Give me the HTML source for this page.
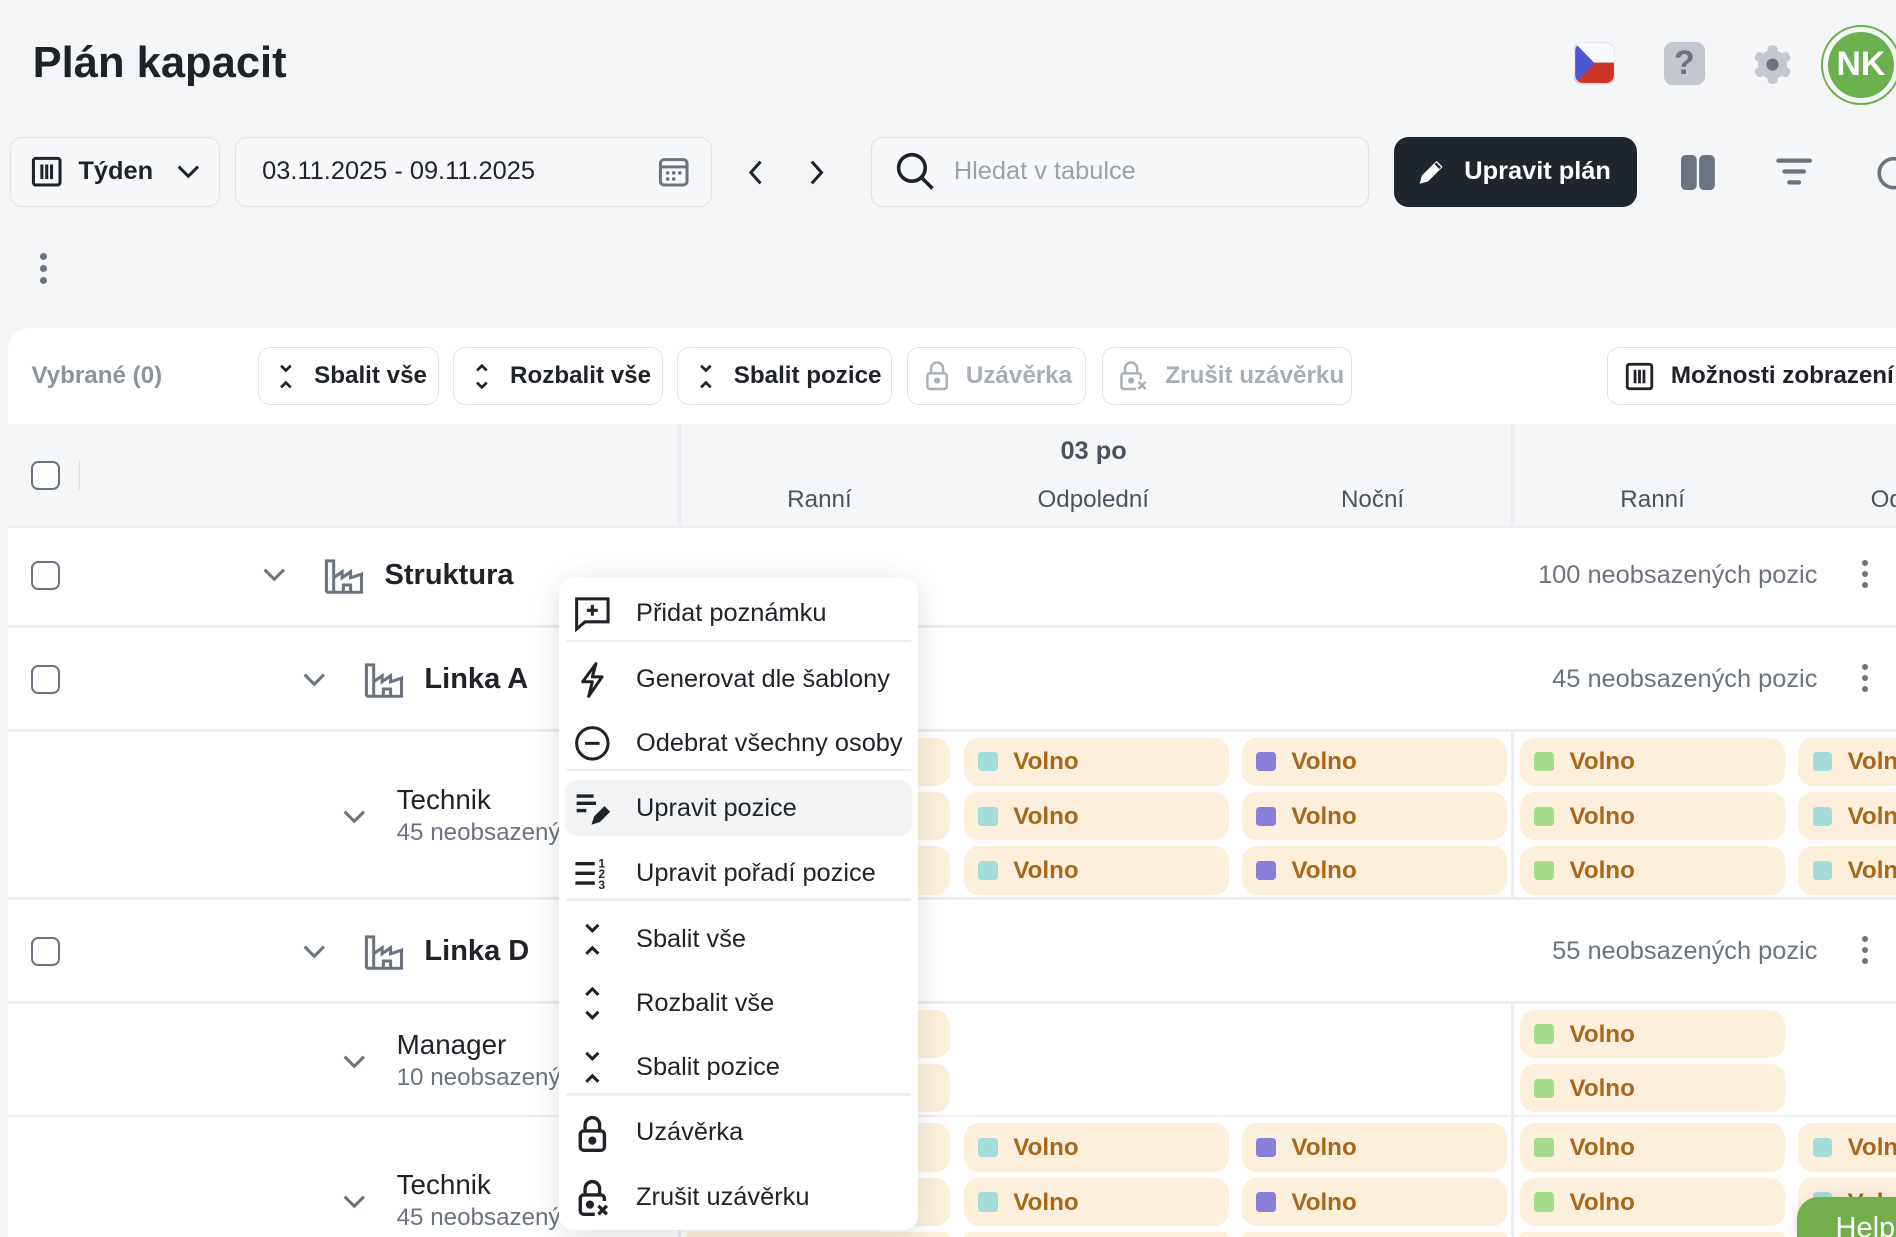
<!DOCTYPE html>
<html><head><meta charset="utf-8">
<style>
html{zoom:1.20918;overflow:hidden;height:1023px;width:1568px}
*{box-sizing:border-box;margin:0;padding:0}
body{width:1568px;height:1023px;overflow:hidden;background:#f5f6f8;font-family:"Liberation Sans",sans-serif;color:#1f2328;position:relative}
.a{position:absolute}
.btn{position:absolute;border:1.5px solid #e1e3e7;border-radius:10px;background:#f7f8fa;display:flex;align-items:center;font-size:21px}
.tb{position:absolute;top:287px;height:48px;border:1.5px solid #e0e2e6;border-radius:10px;background:#fff;display:flex;align-items:center;font-size:20px;font-weight:bold;padding-left:14px;gap:14px}
.dis{color:#a8aeb7}
.line{position:absolute;left:7px;right:0;height:2px;background:#eceef1}
.vl{position:absolute;width:2px;background:#eceef1}
.cb{position:absolute;left:26px;width:24px;height:24px;border:2px solid #6b7380;border-radius:6px;background:#fff}
.chip{position:absolute;width:219px;height:40px;border-radius:12px;background:#fcf0dd;font-size:20px;color:#a8671a;font-weight:bold}
.chip i{position:absolute;left:12px;top:12px;width:16px;height:16px;border-radius:3px}
.chip span{position:absolute;left:41px;top:9px}
.t{background:#a3dcd9}.p{background:#8880d8}.g{background:#a4dc8a}
.lbl{position:absolute;font-size:24px;font-weight:bold;color:#1f2328}
.cnt{position:absolute;right:65px;font-size:21px;color:#6b7380}
.dots{position:absolute;left:1540px;width:6px}
.dots b{display:block;width:5px;height:5px;border-radius:50%;background:#6b7380;margin-bottom:4px}
.menu{position:absolute;left:462px;top:478px;width:297px;height:539px;background:#fff;border-radius:12px;box-shadow:0 4px 24px rgba(0,0,0,.12)}
.mi{position:absolute;left:0;width:297px;height:50px;font-size:21px;color:#1f2328}
.mi span{position:absolute;left:64px;top:14px}
.mi svg{position:absolute;left:12px;top:10px}
.sep{position:absolute;left:6px;width:285px;height:2px;background:#eceef1}
</style></head><body>

<div class="a" style="left:27px;top:32px;font-size:36px;font-weight:bold">Plán kapacit</div>

<svg class="a" style="left:1302px;top:35px" width="34" height="35" viewBox="0 0 34 35"><defs><clipPath id="c"><rect width="34" height="35" rx="7"/></clipPath></defs><g clip-path="url(#c)"><rect width="34" height="35" fill="#f9fafd"/><rect y="17" width="34" height="18" fill="#cc3524"/><path d="M0 0L17 17.5L0 35Z" fill="#4a56d6"/></g><rect x=".5" y=".5" width="33" height="34" rx="7" fill="none" stroke="#e6e8ee"/></svg>
<div class="a" style="left:1376px;top:35px;width:34px;height:35px;border-radius:7px;background:#c4c8ce;color:#6b7380;font-size:28px;font-weight:bold;text-align:center;line-height:35px">?</div>
<svg class="a" style="left:1449px;top:36px" width="34" height="34" viewBox="0 0 34 34"><g fill="#c4c8ce"><circle cx="17" cy="17" r="12"/><rect x="13" y="1" width="8" height="32" rx="3"/><rect x="13" y="1" width="8" height="32" rx="3" transform="rotate(60 17 17)"/><rect x="13" y="1" width="8" height="32" rx="3" transform="rotate(120 17 17)"/></g><circle cx="17" cy="17" r="5" fill="#6b7380"/></svg>
<div class="a" style="left:1506px;top:21px;width:66px;height:66px;border-radius:50%;border:2px solid #6ab04c;padding:4px"><div style="width:100%;height:100%;border-radius:50%;background:#6ab04c;color:#fff;font-size:28px;font-weight:bold;text-align:center;line-height:54px">NK</div></div>

<div class="btn" style="left:8px;top:113px;width:174px;height:58px;font-weight:bold">
 <svg style="margin-left:17px" width="26" height="26" viewBox="0 0 26 26" fill="none" stroke="#1f2328" stroke-width="2.5"><rect x="2" y="2" width="22" height="22" rx="2"/><path d="M9 7v12M13 7v12M17 7v12"/></svg>
 <span style="margin-left:13px">Týden</span>
 <svg style="margin-left:18px" width="22" height="14" viewBox="0 0 22 14" fill="none" stroke="#1f2328" stroke-width="2.5"><path d="M3 3l8 8 8-8"/></svg>
</div>
<div class="btn" style="left:194px;top:113px;width:395px;height:58px">
 <span style="margin-left:22px">03.11.2025 - 09.11.2025</span>
 <svg class="a" style="left:349px;top:15px" width="26" height="26" viewBox="0 0 26 26" fill="none" stroke="#6b7380" stroke-width="2.5"><rect x="2" y="3" width="22" height="21" rx="3"/><path d="M2 9h22"/><g fill="#6b7380" stroke="none"><circle cx="8" cy="14" r="1.5"/><circle cx="13" cy="14" r="1.5"/><circle cx="18" cy="14" r="1.5"/><circle cx="8" cy="19" r="1.5"/><circle cx="13" cy="19" r="1.5"/></g></svg>
</div>
<svg class="a" style="left:617px;top:131px" width="16" height="24" viewBox="0 0 16 24" fill="none" stroke="#1f2328" stroke-width="2.5"><path d="M12 3L4 12l8 9"/></svg>
<svg class="a" style="left:667px;top:131px" width="16" height="24" viewBox="0 0 16 24" fill="none" stroke="#1f2328" stroke-width="2.5"><path d="M4 3l8 9-8 9"/></svg>
<div class="btn" style="left:720px;top:113px;width:412px;height:58px;color:#9aa1ab">
 <svg style="margin-left:19px" width="34" height="34" viewBox="0 0 34 34" fill="none" stroke="#1f2328" stroke-width="3"><circle cx="14" cy="14" r="11"/><path d="M22 22l9 9"/></svg>
 <span style="margin-left:15px">Hledat v tabulce</span>
</div>
<div class="a" style="left:1153px;top:113px;width:201px;height:58px;border-radius:12px;background:#1f262e;color:#fff;font-size:21px;font-weight:bold;display:flex;align-items:center">
 <svg style="margin-left:18px" width="26" height="26" viewBox="0 0 26 26"><path d="M3 23l2-7L17 4l5 5L10 21z" fill="#fff"/><path d="M16 6l4 4" stroke="#1f262e" stroke-width="2"/></svg>
 <span style="margin-left:14px">Upravit plán</span>
</div>
<svg class="a" style="left:1390px;top:128px" width="28" height="29" viewBox="0 0 28 29"><rect x="0" y="0" width="13" height="29" rx="4" fill="#6b7380"/><rect x="15" y="0" width="13" height="29" rx="4" fill="#6b7380"/></svg>
<svg class="a" style="left:1469px;top:130px" width="30" height="24" viewBox="0 0 30 24" stroke="#6b7380" stroke-width="3.5" stroke-linecap="round"><path d="M2 3h26M7 12h16M11 21h8"/></svg>
<svg class="a" style="left:1548px;top:128px" width="20" height="30" viewBox="0 0 20 30" fill="none" stroke="#6b7380" stroke-width="3"><circle cx="18" cy="15" r="12"/></svg>

<div class="a" style="left:33px;top:209px"><div style="width:6px;height:6px;border-radius:50%;background:#6b7380;margin-bottom:4px"></div><div style="width:6px;height:6px;border-radius:50%;background:#6b7380;margin-bottom:4px"></div><div style="width:6px;height:6px;border-radius:50%;background:#6b7380"></div></div>

<div class="a" style="left:7px;top:271px;width:1561px;height:752px;background:#fff;border-top-left-radius:18px"></div>
<div class="a" style="left:26px;top:299px;font-size:20px;font-weight:bold;color:#8c939d">Vybrané (0)</div>

<div class="tb" style="left:213px;width:150px"><svg width="18" height="24" viewBox="0 0 18 24" fill="none" stroke="#1f2328" stroke-width="2.2"><path d="M5 3l4 4 4-4M5 21l4-4 4 4"/></svg>Sbalit vše</div>
<div class="tb" style="left:375px;width:173px"><svg width="18" height="24" viewBox="0 0 18 24" fill="none" stroke="#1f2328" stroke-width="2.2"><path d="M5 7l4-4 4 4M5 17l4 4 4-4"/></svg>Rozbalit vše</div>
<div class="tb" style="left:560px;width:178px"><svg width="18" height="24" viewBox="0 0 18 24" fill="none" stroke="#1f2328" stroke-width="2.2"><path d="M5 3l4 4 4-4M5 21l4-4 4 4"/></svg>Sbalit pozice</div>
<div class="tb dis" style="left:750px;width:148px"><svg width="20" height="26" viewBox="0 0 20 26" fill="none" stroke="#a8aeb7" stroke-width="2"><rect x="2" y="11" width="16" height="13" rx="2"/><path d="M5 11V7a5 5 0 0110 0v4"/><circle cx="10" cy="17" r="1.5" fill="#a8aeb7"/></svg>Uzávěrka</div>
<div class="tb dis" style="left:911px;width:207px"><svg width="24" height="26" viewBox="0 0 24 26" fill="none" stroke="#a8aeb7" stroke-width="2"><path d="M14 24H4a2 2 0 01-2-2V13a2 2 0 012-2h12a2 2 0 012 2v3"/><path d="M5 11V7a5 5 0 0110 0v4"/><circle cx="10" cy="17" r="1.5" fill="#a8aeb7"/><path d="M16 18l6 6M22 18l-6 6"/></svg>Zrušit uzávěrku</div>
<div class="tb" style="left:1329px;width:239px;border-right:none;border-radius:10px 0 0 10px;white-space:nowrap;overflow:hidden"><svg width="24" height="24" viewBox="0 0 26 26" fill="none" stroke="#1f2328" stroke-width="2.5" style="flex:none"><rect x="2" y="2" width="22" height="22" rx="2"/><path d="M9 7v12M13 7v12M17 7v12"/></svg>Možnosti zobrazení</div>

<div class="a" style="left:7px;top:351px;width:1561px;height:85px;background:#f5f6f8"></div>
<div class="vl" style="left:561px;top:351px;height:85px"></div>
<div class="vl" style="left:1250px;top:351px;height:85px"></div>
<div class="vl" style="left:561px;top:604px;height:139px"></div>
<div class="vl" style="left:1250px;top:604px;height:139px"></div>
<div class="vl" style="left:561px;top:829px;height:194px"></div>
<div class="vl" style="left:1250px;top:829px;height:194px"></div>
<div class="a" style="left:65px;top:381px;width:1px;height:24px;background:#dde0e4"></div>
<div class="a" style="left:877px;top:361px;font-size:21px;font-weight:bold;color:#4b5360">03 po</div>
<div class="a" style="left:651px;top:402px;font-size:20px;color:#4b5360">Ranní</div>
<div class="a" style="left:858px;top:402px;font-size:20px;color:#4b5360">Odpolední</div>
<div class="a" style="left:1109px;top:402px;font-size:20px;color:#4b5360">Noční</div>
<div class="a" style="left:1340px;top:402px;font-size:20px;color:#4b5360">Ranní</div>
<div class="a" style="left:1547px;top:402px;font-size:20px;color:#4b5360">Od</div>
<div class="cb" style="top:381px"></div>

<div class="line" style="top:435px"></div>
<div class="line" style="top:517px"></div>
<div class="line" style="top:603px"></div>
<div class="line" style="top:742px"></div>
<div class="line" style="top:828px"></div>
<div class="line" style="top:922px"></div>

<div class="cb" style="top:464px"></div>
<div class="cb" style="top:550px"></div>
<div class="cb" style="top:775px"></div>

<svg class="a" style="left:216px;top:468px" width="22" height="14" viewBox="0 0 22 14" fill="none" stroke="#6b7380" stroke-width="2.5"><path d="M3 3l8 8 8-8"/></svg>
<svg class="a" style="left:268px;top:460px" width="34" height="32" viewBox="0 0 34 32" fill="none" stroke="#6b7380" stroke-width="2.5"><path d="M2 30V4h6v26M8 18l7-5v5l7-5v5l9-3v15H2M16 30v-6h6v6"/></svg>
<div class="lbl" style="left:318px;top:462px">Struktura</div>
<div class="cnt" style="top:464px">100 neobsazených pozic</div>
<div class="dots" style="top:463px"><b></b><b></b><b></b></div>

<svg class="a" style="left:249px;top:555px" width="22" height="14" viewBox="0 0 22 14" fill="none" stroke="#6b7380" stroke-width="2.5"><path d="M3 3l8 8 8-8"/></svg>
<svg class="a" style="left:301px;top:546px" width="34" height="32" viewBox="0 0 34 32" fill="none" stroke="#6b7380" stroke-width="2.5"><path d="M2 30V4h6v26M8 18l7-5v5l7-5v5l9-3v15H2M16 30v-6h6v6"/></svg>
<div class="lbl" style="left:351px;top:548px">Linka A</div>
<div class="cnt" style="top:550px">45 neobsazených pozic</div>
<div class="dots" style="top:549px"><b></b><b></b><b></b></div>

<svg class="a" style="left:282px;top:668px" width="22" height="14" viewBox="0 0 22 14" fill="none" stroke="#6b7380" stroke-width="2.5"><path d="M3 3l8 8 8-8"/></svg>
<div class="a" style="left:328px;top:648px;font-size:23px">Technik</div>
<div class="a" style="left:328px;top:677px;font-size:20px;color:#6b7380">45 neobsazených</div>

<svg class="a" style="left:249px;top:780px" width="22" height="14" viewBox="0 0 22 14" fill="none" stroke="#6b7380" stroke-width="2.5"><path d="M3 3l8 8 8-8"/></svg>
<svg class="a" style="left:301px;top:771px" width="34" height="32" viewBox="0 0 34 32" fill="none" stroke="#6b7380" stroke-width="2.5"><path d="M2 30V4h6v26M8 18l7-5v5l7-5v5l9-3v15H2M16 30v-6h6v6"/></svg>
<div class="lbl" style="left:351px;top:773px">Linka D</div>
<div class="cnt" style="top:775px">55 neobsazených pozic</div>
<div class="dots" style="top:774px"><b></b><b></b><b></b></div>

<svg class="a" style="left:282px;top:871px" width="22" height="14" viewBox="0 0 22 14" fill="none" stroke="#6b7380" stroke-width="2.5"><path d="M3 3l8 8 8-8"/></svg>
<div class="a" style="left:328px;top:851px;font-size:23px">Manager</div>
<div class="a" style="left:328px;top:880px;font-size:20px;color:#6b7380">10 neobsazených</div>

<svg class="a" style="left:282px;top:987px" width="22" height="14" viewBox="0 0 22 14" fill="none" stroke="#6b7380" stroke-width="2.5"><path d="M3 3l8 8 8-8"/></svg>
<div class="a" style="left:328px;top:967px;font-size:23px">Technik</div>
<div class="a" style="left:328px;top:996px;font-size:20px;color:#6b7380;height:27px;overflow:hidden">45 neobsazených</div>

<div class="chip" style="left:567px;top:610px"><i class="g"></i><span>Volno</span></div>
<div class="chip" style="left:797px;top:610px"><i class="t"></i><span>Volno</span></div>
<div class="chip" style="left:1027px;top:610px"><i class="p"></i><span>Volno</span></div>
<div class="chip" style="left:1257px;top:610px"><i class="g"></i><span>Volno</span></div>
<div class="chip" style="left:1487px;top:610px;width:81px;border-radius:12px 0 0 12px;overflow:hidden"><i class="t"></i><span>Volno</span></div>
<div class="chip" style="left:567px;top:655px"><i class="g"></i><span>Volno</span></div>
<div class="chip" style="left:797px;top:655px"><i class="t"></i><span>Volno</span></div>
<div class="chip" style="left:1027px;top:655px"><i class="p"></i><span>Volno</span></div>
<div class="chip" style="left:1257px;top:655px"><i class="g"></i><span>Volno</span></div>
<div class="chip" style="left:1487px;top:655px;width:81px;border-radius:12px 0 0 12px;overflow:hidden"><i class="t"></i><span>Volno</span></div>
<div class="chip" style="left:567px;top:700px"><i class="g"></i><span>Volno</span></div>
<div class="chip" style="left:797px;top:700px"><i class="t"></i><span>Volno</span></div>
<div class="chip" style="left:1027px;top:700px"><i class="p"></i><span>Volno</span></div>
<div class="chip" style="left:1257px;top:700px"><i class="g"></i><span>Volno</span></div>
<div class="chip" style="left:1487px;top:700px;width:81px;border-radius:12px 0 0 12px;overflow:hidden"><i class="t"></i><span>Volno</span></div>
<div class="chip" style="left:567px;top:835px"><i class="g"></i><span>Volno</span></div>
<div class="chip" style="left:1257px;top:835px"><i class="g"></i><span>Volno</span></div>
<div class="chip" style="left:567px;top:880px"><i class="g"></i><span>Volno</span></div>
<div class="chip" style="left:1257px;top:880px"><i class="g"></i><span>Volno</span></div>
<div class="chip" style="left:567px;top:929px"><i class="g"></i><span>Volno</span></div>
<div class="chip" style="left:797px;top:929px"><i class="t"></i><span>Volno</span></div>
<div class="chip" style="left:1027px;top:929px"><i class="p"></i><span>Volno</span></div>
<div class="chip" style="left:1257px;top:929px"><i class="g"></i><span>Volno</span></div>
<div class="chip" style="left:1487px;top:929px;width:81px;border-radius:12px 0 0 12px;overflow:hidden"><i class="t"></i><span>Volno</span></div>
<div class="chip" style="left:567px;top:974px"><i class="g"></i><span>Volno</span></div>
<div class="chip" style="left:797px;top:974px"><i class="t"></i><span>Volno</span></div>
<div class="chip" style="left:1027px;top:974px"><i class="p"></i><span>Volno</span></div>
<div class="chip" style="left:1257px;top:974px"><i class="g"></i><span>Volno</span></div>
<div class="chip" style="left:1487px;top:974px;width:81px;border-radius:12px 0 0 12px;overflow:hidden"><i class="t"></i><span>Volno</span></div>
<div class="chip" style="left:567px;top:1019px;height:4px;border-radius:4px 4px 0 0"></div>
<div class="chip" style="left:797px;top:1019px;height:4px;border-radius:4px 4px 0 0"></div>
<div class="chip" style="left:1027px;top:1019px;height:4px;border-radius:4px 4px 0 0"></div>
<div class="chip" style="left:1257px;top:1019px;height:4px;border-radius:4px 4px 0 0"></div>

<div class="a" style="left:1486px;top:990px;width:82px;height:33px;border-radius:18px 0 0 0;background:#72ae4b;color:#fff;font-size:24px;padding:12px 0 0 32px;overflow:hidden;white-space:nowrap;box-shadow:0 2px 10px rgba(0,0,0,.15)">Help</div>

<div class="menu">
 <div class="mi" style="top:3px"><svg width="32" height="32" viewBox="0 0 32 32" fill="none" stroke="#1f2328" stroke-width="2.5"><path d="M3 4h26v19H10l-7 6z"/><path d="M16 9v9M11.5 13.5h9"/></svg><span>Přidat poznámku</span></div>
 <div class="sep" style="top:51px"></div>
 <div class="mi" style="top:58px"><svg width="32" height="32" viewBox="0 0 32 32" fill="none" stroke="#1f2328" stroke-width="2.5" stroke-linejoin="round"><path d="M19 3L8 18h8l-3 12 11-16h-8z"/></svg><span>Generovat dle šablony</span></div>
 <div class="mi" style="top:111px"><svg width="32" height="32" viewBox="0 0 32 32" fill="none" stroke="#1f2328" stroke-width="2.5"><circle cx="16" cy="16" r="13"/><path d="M10 16h12"/></svg><span>Odebrat všechny osoby</span></div>
 <div class="sep" style="top:158px"></div>
 <div style="position:absolute;left:5px;top:167px;width:287px;height:46px;border-radius:10px;background:#f3f4f6"></div>
 <div class="mi" style="top:165px"><svg width="32" height="32" viewBox="0 0 32 32" fill="none" stroke="#1f2328" stroke-width="2.8"><path d="M3 5h14M3 11h16M3 17h8"/><path d="M16 28l2-6 8-8 4 4-8 8z" fill="#1f2328" stroke-width="1"/></svg><span>Upravit pozice</span></div>
 <div class="mi" style="top:218px"><svg width="32" height="32" viewBox="0 0 32 32" fill="none" stroke="#1f2328" stroke-width="2.8"><path d="M2 8h16M2 16h16M2 24h16"/><text x="21" y="11" font-size="10" font-weight="bold" fill="#1f2328" stroke="none" font-family="Liberation Sans">1</text><text x="21" y="20" font-size="10" font-weight="bold" fill="#1f2328" stroke="none" font-family="Liberation Sans">2</text><text x="21" y="29" font-size="10" font-weight="bold" fill="#1f2328" stroke="none" font-family="Liberation Sans">3</text></svg><span>Upravit pořadí pozice</span></div>
 <div class="sep" style="top:265px"></div>
 <div class="mi" style="top:273px"><svg width="32" height="32" viewBox="0 0 32 32" fill="none" stroke="#1f2328" stroke-width="2.5"><path d="M11 4l5 5 5-5M11 28l5-5 5 5"/></svg><span>Sbalit vše</span></div>
 <div class="mi" style="top:326px"><svg width="32" height="32" viewBox="0 0 32 32" fill="none" stroke="#1f2328" stroke-width="2.5"><path d="M11 9l5-5 5 5M11 23l5 5 5-5"/></svg><span>Rozbalit vše</span></div>
 <div class="mi" style="top:379px"><svg width="32" height="32" viewBox="0 0 32 32" fill="none" stroke="#1f2328" stroke-width="2.5"><path d="M11 4l5 5 5-5M11 28l5-5 5 5"/></svg><span>Sbalit pozice</span></div>
 <div class="sep" style="top:426px"></div>
 <div class="mi" style="top:433px"><svg width="32" height="32" viewBox="0 0 32 32" fill="none" stroke="#1f2328" stroke-width="2.8"><rect x="6" y="14" width="20" height="16" rx="3"/><path d="M10 14V9a6 6 0 0112 0v5"/><circle cx="16" cy="22" r="2" fill="#1f2328"/></svg><span>Uzávěrka</span></div>
 <div class="mi" style="top:486px"><svg width="32" height="32" viewBox="0 0 32 32" fill="none" stroke="#1f2328" stroke-width="2.8"><path d="M18 30H9a3 3 0 01-3-3V17a3 3 0 013-3h14a3 3 0 013 3v2"/><path d="M10 14V9a6 6 0 0112 0v5"/><circle cx="14" cy="22" r="2" fill="#1f2328"/><path d="M21 23l7 7M28 23l-7 7"/></svg><span>Zrušit uzávěrku</span></div>
</div>

</body></html>
